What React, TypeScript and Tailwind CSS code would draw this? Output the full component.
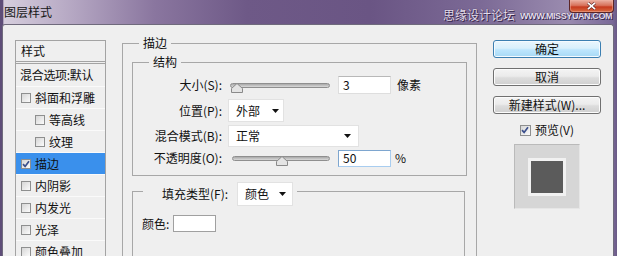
import React from "react";

type Effect = { label: string; indent?: boolean; checked?: boolean; active?: boolean };

const effects: Effect[] = [
  { label: "斜面和浮雕" },
  { label: "等高线", indent: true },
  { label: "纹理", indent: true },
  { label: "描边", checked: true, active: true },
  { label: "内阴影" },
  { label: "内发光" },
  { label: "光泽" },
  { label: "颜色叠加" },
];

function Check({ checked = false, size = "small" }: { checked?: boolean; size?: "small" | "big" }) {
  return (
    <span
      className={`flex shrink-0 items-center justify-center border border-[#8e8f8f] bg-[linear-gradient(135deg,#d6d6d6,#fbfbfb)] ${
        size === "big" ? "h-[11px] w-[11px]" : "h-[10px] w-[10px]"
      }`}
    >
      {checked && (
        <svg viewBox="0 0 8 8" className="h-[8px] w-[8px]">
          <path d="M1 4.2 L3.1 6.4 L7 1.2" fill="none" stroke="#3b4f8c" strokeWidth="1.7" />
        </svg>
      )}
    </span>
  );
}

function Arrow() {
  return (
    <svg viewBox="0 0 7 4" className="h-[4px] w-[7px] shrink-0">
      <path d="M0 0 H7 L3.5 4 Z" fill="#111" />
    </svg>
  );
}

function Thumb({ left }: { left: string }) {
  return (
    <svg viewBox="0 0 12 10" className={`absolute top-[-1px] h-[10px] w-[12px] ${left}`}>
      <path d="M6 0.5 L11.5 5.5 V9.5 H0.5 V5.5 Z" fill="#e4e4e4" stroke="#8a8a8a" strokeWidth="1" />
    </svg>
  );
}

function Track({ width, children }: { width: string; children: React.ReactNode }) {
  return (
    <div
      className={`relative h-[5px] rounded-full border border-[#8f8f8f] bg-[linear-gradient(#a9a9a9,#d9d9d9)] ${width}`}
    >
      {children}
    </div>
  );
}

function Sidebar() {
  return (
    <div className="ml-[12px] mt-[15px] w-[91px] border border-[#a3a3a3] text-[12px] text-[#111]">
      <div className="h-[21px] border-b border-[#a3a3a3] pl-[5px] leading-[20px]">样式</div>
      <div className="mt-[1px] h-[23px] border-t border-[#a3a3a3] pl-[4px] leading-[22px] tracking-[-0.3px]">
        混合选项:默认
      </div>
      {effects.map((e) => (
        <div
          key={e.label}
          className={`flex h-[22px] items-center border-t border-[#fafafa] ${e.indent ? "pl-[19px]" : "pl-[5px]"} ${
            e.active ? "bg-[#3a90ec]" : ""
          }`}
        >
          <Check checked={e.checked} />
          <span className="ml-[4px] leading-[16px]">{e.label}</span>
        </div>
      ))}
    </div>
  );
}

function Main() {
  return (
    <fieldset className="ml-[16px] mt-[10px] w-[355px] min-w-0 border border-[#a7a7a7] px-[9px] pb-[40px] text-[12px] text-[#111]">
      <legend className="ml-[7px] px-[4px] leading-[16px]">描边</legend>

      <fieldset className="mt-[3px] min-w-0 border border-[#a7a7a7] pb-[8px]">
        <legend className="ml-[16px] px-[4px] leading-[16px]">结构</legend>

        <div className="mt-[5px] flex h-[20px] items-center">
          <span className="w-[89px] text-right">大小(S):</span>
          <div className="ml-[8px] flex w-[100px] items-center">
            <Track width="w-[100px]">
              <Thumb left="left-[0px]" />
            </Track>
          </div>
          <div className="ml-[8px] flex h-[18px] w-[53px] items-center border border-[#dedede] border-t-[#b8b8b8] bg-white pl-[4px]">
            3
          </div>
          <span className="ml-[6px]">像素</span>
        </div>

        <div className="mt-[4px] flex h-[23px] items-center">
          <span className="w-[89px] text-right">位置(P):</span>
          <div className="ml-[6px] flex h-full w-[56px] items-center justify-between border border-[#e2e2e2] bg-white pl-[7px] pr-[4px]">
            <span>外部</span>
            <Arrow />
          </div>
        </div>

        <div className="mt-[3px] flex h-[22px] items-center">
          <span className="w-[89px] text-right">混合模式(B):</span>
          <div className="ml-[6px] flex h-full w-[131px] items-center justify-between border border-[#e2e2e2] bg-white pl-[7px] pr-[7px]">
            <span>正常</span>
            <Arrow />
          </div>
        </div>

        <div className="mt-[2px] flex h-[18px] items-center">
          <span className="w-[89px] text-right">不透明度(O):</span>
          <div className="ml-[10px] flex w-[98px] items-center">
            <Track width="w-[98px]">
              <Thumb left="left-[43px]" />
            </Track>
          </div>
          <div className="ml-[8px] flex h-[17px] w-[53px] items-center border border-[#a8cdf0] border-l-[#7ea6cf] border-t-[#7ea6cf] bg-white pl-[4px]">
            50
          </div>
          <span className="ml-[4px]">%</span>
        </div>
      </fieldset>

      <fieldset className="mr-[2px] mt-[6px] min-w-0 border border-[#a7a7a7] pb-[40px]">
        <legend className="ml-[10px] flex h-[18px] items-start pl-[19px] pr-[4px]">
          <span className="w-[69px] leading-[24px]">填充类型(F):</span>
          <div className="ml-[6px] flex h-[24px] w-[56px] shrink-0 items-center justify-between border border-[#e2e2e2] bg-white pl-[7px] pr-[6px]">
            <span>颜色</span>
            <Arrow />
          </div>
        </legend>
        <div className="mt-[15px] flex h-[17px] items-center pl-[9px]">
          <span className="w-[31px]">颜色:</span>
          <div className="h-[17px] w-[43px] border border-[#a0a0a0] bg-white" />
        </div>
      </fieldset>
    </fieldset>
  );
}

function RightColumn() {
  const plain =
    "mt-[10px] h-[18px] w-full rounded-[3px] border border-[#707070] bg-[linear-gradient(#f4f4f4,#ebebeb_45%,#dddddd_55%,#cfcfcf)] text-[12px] leading-[16px] text-[#111] shadow-[inset_0_0_0_1px_#fcfcfc]";
  return (
    <div className="ml-[16px] mt-[15px] flex w-[108px] flex-col items-center text-[12px] text-[#111]">
      <button className="h-[18px] w-full rounded-[3px] border border-[#3c7fb1] bg-[linear-gradient(#eaf6fd,#d9f0fc_45%,#bee6fd_55%,#a7d9f5)] text-[12px] leading-[16px] text-[#111] shadow-[inset_0_0_0_1px_#f5fbff]">
        确定
      </button>
      <button className={plain}>取消</button>
      <button className={plain}>新建样式(W)...</button>
      <div className="mt-[7px] flex h-[18px] items-center">
        <Check checked size="big" />
        <span className="ml-[4px] leading-[16px]">预览(V)</span>
      </div>
      <div className="mt-[5px] flex h-[65px] w-[66px] items-center justify-center border border-[#bababa] border-b-[#e6e6e6] border-r-[#e6e6e6] bg-[#d6d6d6]">
        <div className="h-[38px] w-[38px] border-[3px] border-[#f1f1f1] bg-[#5b5b5b]" />
      </div>
    </div>
  );
}

export default function App() {
  return (
    <div className="relative flex h-[256px] w-[617px] flex-col overflow-hidden bg-[linear-gradient(90deg,#5e4d78_0%,#5e4d78_0.5%,#d6cedd_0.6%,#b4a6c2_12%,#8a769f_25%,#6e5987_40%,#6a5584_60%,#7c6a96_78%,#9a8baf_92%,#7a6998_99.3%,#6a5a86_100%)] font-['Noto_Sans_CJK_SC','Noto_Sans',sans-serif]">
      <div className="flex h-[24px] shrink-0 items-start justify-between">
        <span className="ml-[4px] mt-[4px] text-[12px] leading-[16px] text-[#161616]">图层样式</span>
        <div className="mr-[3px] flex h-[13px] w-[45px] items-center justify-center rounded-b-[4px] border border-t-0 border-[#5c2626] bg-[linear-gradient(#eab0a2,#d8735c_45%,#c63a1e_58%,#d96c42)] shadow-[inset_0_0_0_1px_#f0b0a080]">
          <svg viewBox="0 0 12 9" className="h-[8px] w-[11px]">
            <path d="M2 1 L10 8 M10 1 L2 8" stroke="#5a2020" strokeWidth="3.2" />
            <path d="M2 1 L10 8 M10 1 L2 8" stroke="#ffffff" strokeWidth="2" />
          </svg>
        </div>
      </div>

      <div className="absolute left-[443px] top-[8px] flex items-end whitespace-nowrap">
        <span className="text-[12px] leading-[13px] text-[#e4ddec] [text-shadow:0_0_1px_#2e2040,1px_1px_0_#3a2a50]">
          思缘设计论坛
        </span>
        <span className="mb-[1px] ml-[5px] font-['Liberation_Sans',sans-serif] text-[9px] font-bold leading-[7px] tracking-[-0.4px] text-[#e4ddec] [text-shadow:0_0_1px_#2e2040,1px_1px_0_#3a2a50]">
          WWW.MISSYUAN.COM
        </span>
      </div>

      <div className="ml-[2px] mr-[3px] flex flex-1 items-start rounded-t-[3px] border border-b-0 border-[#6f6a7c] bg-[#efefef]">
        <Sidebar />
        <Main />
        <RightColumn />
      </div>
    </div>
  );
}
